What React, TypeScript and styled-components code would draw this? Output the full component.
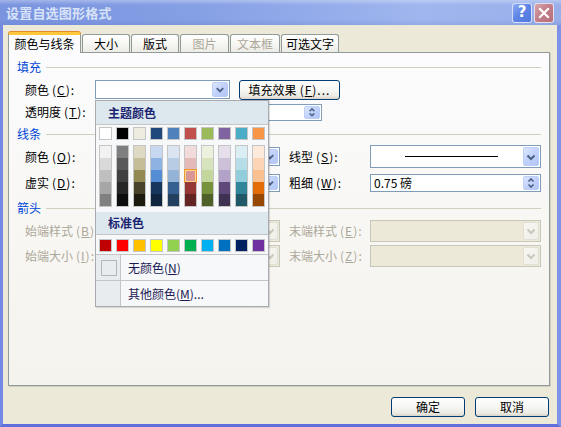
import React from "react";
import styled, { createGlobalStyle, css } from "styled-components";

const GlobalStyle = createGlobalStyle`
  html, body { margin: 0; padding: 0; background: #ffffff; }
  body { font-family: "Noto Sans CJK SC", "DejaVu Sans", sans-serif; font-size: 12px; }
  * { box-sizing: border-box; }
  u { text-decoration: underline; text-underline-offset: 1px; }
`;

const FONT = `"Noto Sans CJK SC", "DejaVu Sans", sans-serif`;

const themeTop = ["#FFFFFF", "#000000", "#EEECE1", "#1F497D", "#4F81BD", "#C0504D", "#9BBB59", "#8064A2", "#4BACC6", "#F79646"];
const themeShades = [
  ["#F2F2F2", "#D9D9D9", "#BFBFBF", "#A6A6A6", "#808080"],
  ["#7F7F7F", "#595959", "#404040", "#262626", "#0D0D0D"],
  ["#DDD9C3", "#C4BD97", "#938953", "#494429", "#1D1B10"],
  ["#C6D9F0", "#8DB3E2", "#548DD4", "#17365D", "#0F243E"],
  ["#DBE5F1", "#B8CCE4", "#95B3D7", "#366092", "#244061"],
  ["#F2DCDB", "#E5B9B7", "#D99694", "#953734", "#632423"],
  ["#EBF1DD", "#D7E3BC", "#C3D69B", "#76923C", "#4F6128"],
  ["#E5E0EC", "#CCC1D9", "#B2A2C7", "#5F497A", "#3F3151"],
  ["#DBEEF3", "#B7DDE8", "#92CDDC", "#31859B", "#205867"],
  ["#FDEADA", "#FBD5B5", "#FAC08F", "#E36C09", "#974806"],
];
const standard = ["#C00000", "#FF0000", "#FFC000", "#FFFF00", "#92D050", "#00B050", "#00B0F0", "#0070C0", "#002060", "#7030A0"];

/* ---------- window chrome ---------- */
const Window = styled.div`
  position: relative;
  width: 561px;
  height: 427px;
  display: flex;
  flex-direction: column;
  overflow: hidden;
  font-family: ${FONT};
`;

const TitleBar = styled.div`
  height: 25px;
  flex: none;
  display: flex;
  align-items: center;
  padding: 0 7px 0 6px;
  background:
    linear-gradient(to bottom, rgba(255,255,255,0.3) 0px, rgba(255,255,255,0) 5px, rgba(255,255,255,0) 19px, rgba(40,60,160,0.10) 25px),
    linear-gradient(to right, #7a94df 0%, #86a0e5 35%, #9fb6ee 75%, #98afea 100%);
`;

const Title = styled.div`
  flex: 1;
  color: #d8e3f8;
  font-weight: 700;
  font-size: 13px;
  line-height: 1;
  letter-spacing: 0.2px;
`;

const CaptionButtons = styled.div`
  display: flex;
  gap: 2px;
`;

const CaptionButton = styled.div<{ $kind: "help" | "close" }>`
  width: 20px;
  height: 20px;
  border: 1px solid rgba(240, 244, 255, 0.8);
  border-radius: 3px;
  display: flex;
  align-items: center;
  justify-content: center;
  color: #ffffff;
  font: 700 15px "DejaVu Sans", sans-serif;
  line-height: 1;
  background: ${(p) =>
    p.$kind === "help"
      ? "linear-gradient(135deg, #8eabf3 0%, #5f85e6 45%, #5078de 100%)"
      : "linear-gradient(135deg, #d8a6ae 0%, #c3808a 45%, #b66f79 100%)"};
`;

const Frame = styled.div`
  flex: 1;
  display: flex;
  flex-direction: column;
  border-left: 3px solid #7387e4;
  border-right: 4px solid #7d91e8;
  border-bottom: 3px solid #5f70dc;
  background: #ece9d8;
  padding: 7px 7px 7px 5px;
`;

/* ---------- tabs ---------- */
const TabRow = styled.div`
  height: 20px;
  display: flex;
  align-items: flex-end;
  gap: 1px;
  position: relative;
  z-index: 2;
`;

const Tab = styled.div<{ $w: number; $active?: boolean; $disabled?: boolean }>`
  width: ${(p) => p.$w}px;
  height: 18px;
  display: flex;
  align-items: center;
  justify-content: center;
  font-size: 12px;
  line-height: 1;
  color: ${(p) => (p.$disabled ? "#aca899" : "#000000")};
  border: 1px solid #919b9c;
  border-bottom: none;
  border-radius: 3px 3px 0 0;
  background: linear-gradient(to bottom, #ffffff 0%, #f7f7f4 50%, #ecebe5 100%);
  ${(p) =>
    p.$active &&
    css`
      height: 21px;
      margin-bottom: -1px;
      padding-bottom: 1px;
      background: #fcfcfe;
      border-top: 3px solid #ffc83c;
      box-shadow: 0 -1px 0 #e68b2c;
    `}
`;

const Panel = styled.div`
  height: 334px;
  position: relative;
  z-index: 1;
  border: 1px solid #919b9c;
  background: linear-gradient(to bottom, #fcfcfe 0%, #f7f6f2 60%, #f4f3ee 100%);
  box-shadow: 1px 1px 0 #d0cebf;
  display: flex;
  flex-direction: column;
  padding: 0 8px;
`;

const SectionHeader = styled.div<{ $mt: number }>`
  margin-top: ${(p) => p.$mt}px;
  height: 16px;
  display: flex;
  align-items: center;
  color: #0046d5;
  font-size: 12px;
  line-height: 1;
`;

const HeaderLine = styled.div`
  flex: 1;
  height: 1px;
  margin-left: 5px;
  background: #d0d0bf;
`;

const Row = styled.div<{ $mt: number; $h: number }>`
  margin-top: ${(p) => p.$mt}px;
  height: ${(p) => p.$h}px;
  display: flex;
  align-items: center;
  padding-left: 8px;
`;

const Label = styled.div<{ $w: number; $disabled?: boolean; $ml?: number }>`
  width: ${(p) => p.$w}px;
  margin-left: ${(p) => p.$ml ?? 0}px;
  flex: none;
  font-size: 12px;
  line-height: 1;
  white-space: nowrap;
  color: ${(p) => (p.$disabled ? "#aca899" : "#000000")};
`;

const Mnemonic = styled.span`
  margin-left: 3px;
  letter-spacing: 1px;
`;

const Field = styled.div<{ $w: number; $h: number; $disabled?: boolean; $ml?: number }>`
  width: ${(p) => p.$w}px;
  height: ${(p) => p.$h}px;
  margin-left: ${(p) => p.$ml ?? 0}px;
  flex: none;
  border: 1px solid ${(p) => (p.$disabled ? "#c9c7ba" : "#7f9db9")};
  background: ${(p) => (p.$disabled ? "#ece9d8" : "#ffffff")};
  display: flex;
  align-items: stretch;
  padding: 1px;
`;

const FieldText = styled.div`
  flex: 1;
  display: flex;
  align-items: center;
  padding-left: 2px;
  font-size: 12px;
  line-height: 1;
  color: #000;
`;

const LineSample = styled.div`
  flex: 1;
  display: flex;
  align-items: center;
  justify-content: center;
  &::before {
    content: "";
    width: 93px;
    height: 1px;
    background: #000;
    margin-left: 8px;
  }
`;

const ArrowButton = styled.div<{ $disabled?: boolean }>`
  width: 16px;
  flex: none;
  margin-left: auto;
  border: 1px solid ${(p) => (p.$disabled ? "#e2e0d6" : "#bccdf7")};
  border-radius: 2px;
  display: flex;
  flex-direction: column;
  align-items: center;
  justify-content: center;
  background: ${(p) =>
    p.$disabled
      ? "linear-gradient(135deg, #f7f6f1 0%, #efeee8 100%)"
      : "linear-gradient(135deg, #dde7fe 0%, #c3d3fb 45%, #b2c6f5 100%)"};
`;

const PushButton = styled.div<{ $w: number; $ml?: number }>`
  width: ${(p) => p.$w}px;
  height: 20px;
  margin-left: ${(p) => p.$ml ?? 0}px;
  flex: none;
  border: 1px solid #003c74;
  border-radius: 3px;
  display: flex;
  align-items: center;
  justify-content: center;
  font-size: 12px;
  line-height: 1;
  color: #000;
  background: linear-gradient(to bottom, #ffffff 0%, #f5f5f1 55%, #ebe9e2 85%, #d8d3c8 100%);
`;

const SliderTrack = styled.div<{ $w: number }>`
  width: ${(p) => p.$w}px;
  height: 4px;
  flex: none;
  border: 1px solid #9d9c99;
  background: #f3f3ef;
`;

const Footer = styled.div`
  margin-top: 11px;
  display: flex;
  justify-content: flex-end;
  gap: 10px;
  padding-right: 1px;
`;

/* ---------- colour popup ---------- */
const Popup = styled.div`
  position: absolute;
  left: 95px;
  top: 100px;
  width: 174px;
  height: 207px;
  z-index: 10;
  border: 1px solid #a7abb0;
  background: #f7f8f9;
  box-shadow: 1px 1px 1px rgba(0, 0, 0, 0.12);
  display: flex;
  flex-direction: column;
`;

const PopupHeader = styled.div<{ $mt: number; $h: number }>`
  margin-top: ${(p) => p.$mt}px;
  height: ${(p) => p.$h}px;
  flex: none;
  display: flex;
  align-items: center;
  padding-left: 12px;
  background: #dde7ee;
  border-bottom: 1px solid #c5c5c5;
  color: #1a2470;
  font-weight: 700;
  font-size: 12px;
  line-height: 1;
`;

const SwatchRow = styled.div<{ $mt: number }>`
  margin-top: ${(p) => p.$mt}px;
  display: flex;
  gap: 4px;
  padding-left: 3px;
`;

const Swatch = styled.div`
  width: 13px;
  height: 13px;
  border: 1px solid #c5c5c5;
`;

const ShadeColumn = styled.div`
  width: 13px;
  border: 1px solid #c5c5c5;
  display: flex;
  flex-direction: column;
`;

const ShadeCell = styled.div<{ $selected?: boolean }>`
  height: 12px;
  position: relative;
  ${(p) =>
    p.$selected &&
    css`
      &::after {
        content: "";
        position: absolute;
        inset: -1px -1px -1px -1px;
        border: 1px solid #f29436;
        box-shadow: inset 0 0 0 1px #ffd88a;
      }
    `}
`;

const Separator = styled.div<{ $mt?: number }>`
  margin-top: ${(p) => p.$mt ?? 0}px;
  height: 1px;
  flex: none;
  background: #c5c5c5;
`;

const MenuItem = styled.div`
  height: 25px;
  flex: none;
  display: flex;
  align-items: stretch;
`;

const IconStrip = styled.div`
  width: 25px;
  flex: none;
  background: #e9ecee;
  border-right: 1px solid #c5c5c5;
  display: flex;
  align-items: center;
  padding-left: 5px;
`;

const EmptyBox = styled.div`
  width: 16px;
  height: 16px;
  border: 1px solid #b3b6b8;
  background: #e9ecee;
`;

const MenuText = styled.div`
  flex: 1;
  display: flex;
  align-items: center;
  padding-left: 7px;
  font-size: 12px;
  line-height: 1;
  color: #1b1b55;
`;

/* ---------- icons ---------- */
const Chevron = ({ disabled, dir = "down", size = 16 }: { disabled?: boolean; dir?: "down" | "up"; size?: number }) => (
  <svg width={size === 16 ? 14 : 10} height={size === 16 ? 14 : 6} viewBox={size === 16 ? "0 0 14 14" : "0 0 10 6"}>
    {size === 16 ? (
      <path d="M3.5 5.5 L7 9 L10.5 5.5" fill="none" stroke={disabled ? "#c9c7ba" : "#4d6185"} strokeWidth="2" />
    ) : dir === "up" ? (
      <path d="M2.5 4.5 L5 2 L7.5 4.5" fill="none" stroke="#4d6185" strokeWidth="1.6" />
    ) : (
      <path d="M2.5 1.5 L5 4 L7.5 1.5" fill="none" stroke="#4d6185" strokeWidth="1.6" />
    )}
  </svg>
);

const CloseGlyph = () => (
  <svg width="12" height="12" viewBox="0 0 12 12">
    <path d="M2 2 L10 10 M10 2 L2 10" stroke="#ffffff" strokeWidth="2.2" strokeLinecap="square" />
  </svg>
);

const DropButton = ({ disabled }: { disabled?: boolean }) => (
  <ArrowButton $disabled={disabled}>
    <Chevron disabled={disabled} />
  </ArrowButton>
);

const SpinButton = () => (
  <ArrowButton>
    <Chevron dir="up" size={8} />
    <Chevron dir="down" size={8} />
  </ArrowButton>
);

const ColorPopup = () => (
  <Popup>
    <PopupHeader $mt={0} $h={24}>主题颜色</PopupHeader>
    <SwatchRow $mt={2}>
      {themeTop.map((c) => (
        <Swatch key={c} style={{ background: c }} />
      ))}
    </SwatchRow>
    <SwatchRow $mt={5}>
      {themeShades.map((col, ci) => (
        <ShadeColumn key={ci}>
          {col.map((c, ri) => (
            <ShadeCell key={c} $selected={ci === 5 && ri === 2} style={{ background: c }} />
          ))}
        </ShadeColumn>
      ))}
    </SwatchRow>
    <PopupHeader $mt={5} $h={23}>标准色</PopupHeader>
    <SwatchRow $mt={4}>
      {standard.map((c) => (
        <Swatch key={c} style={{ background: c }} />
      ))}
    </SwatchRow>
    <Separator $mt={2} />
    <MenuItem>
      <IconStrip>
        <EmptyBox />
      </IconStrip>
      <MenuText>
        无颜色(<u>N</u>)
      </MenuText>
    </MenuItem>
    <Separator />
    <MenuItem>
      <IconStrip />
      <MenuText>
        其他颜色(<u>M</u>)...
      </MenuText>
    </MenuItem>
  </Popup>
);

const L = ({ t, k }: { t: string; k: string }) => (
  <>
    {t}
    <Mnemonic>
      (<u>{k}</u>):
    </Mnemonic>
  </>
);

export default function App() {
  return (
    <>
      <GlobalStyle />
      <Window>
        <TitleBar>
          <Title>设置自选图形格式</Title>
          <CaptionButtons>
            <CaptionButton $kind="help">?</CaptionButton>
            <CaptionButton $kind="close">
              <CloseGlyph />
            </CaptionButton>
          </CaptionButtons>
        </TitleBar>
        <Frame>
          <TabRow>
            <Tab $w={73} $active>颜色与线条</Tab>
            <Tab $w={48}>大小</Tab>
            <Tab $w={48}>版式</Tab>
            <Tab $w={49} $disabled>图片</Tab>
            <Tab $w={50} $disabled>文本框</Tab>
            <Tab $w={58}>可选文字</Tab>
          </TabRow>
          <Panel>
            <SectionHeader $mt={6}>
              填充
              <HeaderLine />
            </SectionHeader>
            <Row $mt={5} $h={19}>
              <Label $w={70}>
                <L t="颜色" k="C" />
              </Label>
              <Field $w={135} $h={19}>
                <DropButton />
              </Field>
              <PushButton $w={101} $ml={9}>
                填充效果<Mnemonic>(<u>F</u>)...</Mnemonic>
              </PushButton>
            </Row>
            <Row $mt={4} $h={18}>
              <Label $w={70}>
                <L t="透明度" k="T" />
              </Label>
              <SliderTrack $w={140} />
              <Field $w={82} $h={17} $ml={5}>
                <FieldText>0 %</FieldText>
                <SpinButton />
              </Field>
            </Row>
            <SectionHeader $mt={5}>
              线条
              <HeaderLine />
            </SectionHeader>
            <Row $mt={3} $h={23}>
              <Label $w={70}>
                <L t="颜色" k="O" />
              </Label>
              <Field $w={185} $h={19}>
                <DropButton />
              </Field>
              <Label $w={81} $ml={9}>
                <L t="线型" k="S" />
              </Label>
              <Field $w={171} $h={23}>
                <LineSample />
                <DropButton />
              </Field>
            </Row>
            <Row $mt={5} $h={19}>
              <Label $w={70}>
                <L t="虚实" k="D" />
              </Label>
              <Field $w={185} $h={18}>
                <DropButton />
              </Field>
              <Label $w={81} $ml={9}>
                <L t="粗细" k="W" />
              </Label>
              <Field $w={171} $h={18}>
                <FieldText>0.75 磅</FieldText>
                <SpinButton />
              </Field>
            </Row>
            <SectionHeader $mt={8}>
              箭头
              <HeaderLine />
            </SectionHeader>
            <Row $mt={4} $h={22}>
              <Label $w={70} $disabled>
                <L t="始端样式" k="B" />
              </Label>
              <Field $w={185} $h={22} $disabled>
                <DropButton disabled />
              </Field>
              <Label $w={81} $ml={9} $disabled>
                <L t="末端样式" k="E" />
              </Label>
              <Field $w={171} $h={22} $disabled>
                <DropButton disabled />
              </Field>
            </Row>
            <Row $mt={3} $h={22}>
              <Label $w={70} $disabled>
                <L t="始端大小" k="I" />
              </Label>
              <Field $w={185} $h={22} $disabled>
                <DropButton disabled />
              </Field>
              <Label $w={81} $ml={9} $disabled>
                <L t="末端大小" k="Z" />
              </Label>
              <Field $w={171} $h={22} $disabled>
                <DropButton disabled />
              </Field>
            </Row>
          </Panel>
          <Footer>
            <PushButton $w={74}>确定</PushButton>
            <PushButton $w={74}>取消</PushButton>
          </Footer>
        </Frame>
        <ColorPopup />
      </Window>
    </>
  );
}
